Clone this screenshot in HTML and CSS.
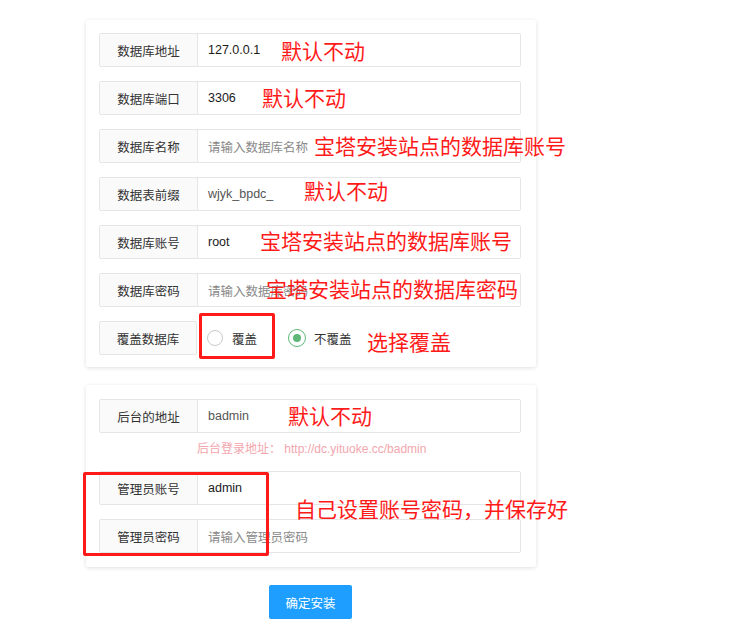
FILE: index.html
```html
<!DOCTYPE html>
<html lang="zh-CN">
<head>
<meta charset="utf-8">
<title>安装</title>
<link rel="stylesheet" href="styles.css">
</head>
<body>
<div class="page">
  <div class="panel panel-db">
    <div class="row"><div class="label">数据库地址</div><div class="field val">127.0.0.1</div></div>
    <div class="row"><div class="label">数据库端口</div><div class="field val">3306</div></div>
    <div class="row"><div class="label">数据库名称</div><div class="field ph">请输入数据库名称</div></div>
    <div class="row"><div class="label">数据表前缀</div><div class="field val-soft">wjyk_bpdc_</div></div>
    <div class="row"><div class="label">数据库账号</div><div class="field val">root</div></div>
    <div class="row"><div class="label">数据库密码</div><div class="field ph">请输入数据库密码</div></div>
    <div class="row row-radio">
      <div class="label">覆盖数据库</div>
      <div class="radios">
        <span class="radio"><i class="dot"></i>覆盖</span>
        <span class="radio on"><i class="dot"></i>不覆盖</span>
      </div>
    </div>
  </div>

  <div class="panel panel-admin">
    <div class="row"><div class="label">后台的地址</div><div class="field val-soft">badmin</div></div>
    <div class="hint">后台登录地址： http://dc.yituoke.cc/badmin</div>
    <div class="row"><div class="label">管理员账号</div><div class="field val">admin</div></div>
    <div class="row gap"><div class="label">管理员密码</div><div class="field ph">请输入管理员密码</div></div>
  </div>

  <div class="actions"><button class="btn">确定安装</button></div>

  <span class="note n1">默认不动</span>
  <span class="note n2">默认不动</span>
  <span class="note n3">宝塔安装站点的数据库账号</span>
  <span class="note n4">默认不动</span>
  <span class="note n5">宝塔安装站点的数据库账号</span>
  <span class="note n6">宝塔安装站点的数据库密码</span>
  <span class="note n7">选择覆盖</span>
  <span class="note n8">默认不动</span>
  <span class="note n9">自己设置账号密码，并保存好</span>
  <div class="mark m1"></div>
  <div class="mark m2"></div>
</div>
</body>
</html>
```

FILE: styles.css
```css
html, body {
  margin: 0;
  padding: 0;
  background: #fff;
}
.page {
  position: relative;
  width: 751px;
  height: 638px;
  padding: 20px 0 0 86px;
  box-sizing: border-box;
  font-family: "Liberation Sans", "Noto Sans CJK SC", sans-serif;
  font-size: 12.5px;
  color: #333;
}
.panel {
  width: 450px;
  box-sizing: border-box;
  background: #fff;
  border-radius: 2px;
  box-shadow: 0 1px 4px rgba(0, 0, 0, 0.13);
  display: flex;
  flex-direction: column;
}
.panel-db {
  padding: 13px 15px 12px 13px;
  gap: 14px;
}
.panel-admin {
  margin-top: 18px;
  padding: 14px 15px 14px 13px;
}
.row {
  display: flex;
  height: 34px;
  box-sizing: border-box;
  border: 1px solid #e6e6e6;
  border-radius: 2px;
}
.row.gap {
  margin-top: 14px;
}
.row-radio {
  border: none;
}
.label {
  width: 98px;
  flex: none;
  box-sizing: border-box;
  background: #fafafa;
  border-right: 1px solid #e6e6e6;
  display: flex;
  align-items: center;
  justify-content: center;
  color: #333;
  font-family: "Noto Sans CJK SC", sans-serif;
}
.row-radio .label {
  border: 1px solid #e6e6e6;
  border-radius: 2px;
}
.field {
  flex: 1;
  display: flex;
  align-items: center;
  padding-left: 10px;
}
.val { color: #1a1a1a; }
.val-soft { color: #555; }
.ph { color: #8a8a8a; }
.radios {
  display: flex;
  align-items: center;
  padding-left: 10px;
  gap: 31px;
}
.radio {
  display: flex;
  align-items: center;
  gap: 9px;
  color: #333;
  font-family: "Noto Sans CJK SC", sans-serif;
}
.dot {
  width: 16px;
  height: 16px;
  box-sizing: border-box;
  border: 1.5px solid #c9c9c9;
  border-radius: 50%;
  display: flex;
  align-items: center;
  justify-content: center;
}
.radio.on {
  gap: 8px;
}
.radio.on .dot {
  width: 18px;
  height: 18px;
  border-color: #5fb878;
}
.radio.on .dot::after {
  content: "";
  width: 8px;
  height: 8px;
  border-radius: 50%;
  background: #5fb878;
}
.hint {
  height: 38px;
  box-sizing: border-box;
  padding: 6px 0 0 98px;
  color: #f2a6ad;
  font-size: 12px;
  font-family: "Liberation Sans", "Noto Sans CJK SC", sans-serif;
}
.actions {
  margin: 18px 0 0 183px;
}
.btn {
  width: 83px;
  height: 34px;
  border: none;
  border-radius: 2px;
  background: #1e9fff;
  color: #fff;
  font-family: "Noto Sans CJK SC", sans-serif;
  font-size: 12.5px;
  padding: 0;
}
.note {
  position: absolute;
  color: #ff1a1a;
  font-family: "Noto Sans CJK SC", sans-serif;
  font-size: 21px;
  line-height: 24px;
  white-space: nowrap;
}
.n1 { left: 281px; top: 38px; }
.n2 { left: 262px; top: 85px; }
.n3 { left: 314px; top: 133px; }
.n4 { left: 304px; top: 178px; }
.n5 { left: 260px; top: 228px; }
.n6 { left: 266px; top: 276px; }
.n7 { left: 367px; top: 329px; }
.n8 { left: 288px; top: 403px; }
.n9 { left: 295px; top: 496px; }
.mark {
  position: absolute;
  border: 3px solid #ff1a1a;
  border-radius: 2px;
  box-sizing: border-box;
}
.m1 { left: 199px; top: 313px; width: 76px; height: 46px; }
.m2 { left: 83px; top: 472px; width: 186px; height: 84px; }
```
